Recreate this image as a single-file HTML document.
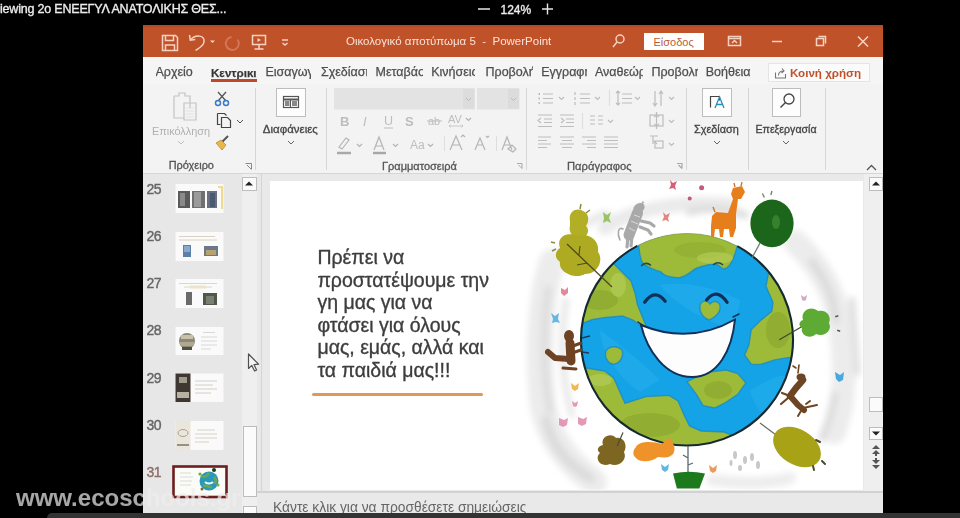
<!DOCTYPE html>
<html><head><meta charset="utf-8">
<style>
*{margin:0;padding:0;box-sizing:border-box}
html,body{width:960px;height:518px;overflow:hidden;background:#000}
body{position:relative;font-family:"Liberation Sans",sans-serif}
.a{position:absolute}
.t{position:absolute;white-space:nowrap;line-height:1}
#top{color:#ececec;font-size:12.5px;letter-spacing:-0.2px;-webkit-text-stroke:0.35px #ececec}
#win{left:143px;top:25px;width:740px;height:488px;background:#f3f3f3;overflow:hidden}
#tb{left:0;top:0;width:740px;height:32px;background:#c0522a;box-shadow:inset 0 2px 0 #b24d2a}
#tabs{left:0;top:32px;width:740px;height:27px;background:#f5f5f5}
#rib{left:0;top:59px;width:740px;height:90px;background:#f3f3f3;border-bottom:1px solid #d6d6d6}
#body{left:0;top:149px;width:740px;height:339px;background:#e6e6e6}
.tab{position:absolute;top:10px;font-size:12.5px;color:#4e4e4e;-webkit-text-stroke:0.25px #4e4e4e;white-space:nowrap;overflow:hidden;line-height:14px}
.sep{position:absolute;width:1px;background:#d4d4d4}
.lbl{position:absolute;font-size:11px;color:#444;white-space:nowrap;line-height:12px}
</style></head><body><div id="wrap" style="position:absolute;left:0;top:0;width:960px;height:518px;filter:blur(0.45px)">
<!-- top video bar -->
<div class="t" id="top" style="left:0;top:3px">iewing 2o ΕΝΕΕΓΥΛ ΑΝΑΤΟΛΙΚΗΣ ΘΕΣ...</div>
<div class="t" id="top" style="left:500.5px;top:3.5px;font-size:12px;letter-spacing:0">124%</div>
<svg class="a" style="left:470px;top:0" width="90" height="20" stroke="#e6e6e6" stroke-width="1.4"><path d="M8 9h12M72 9h11M77.5 3.5v11"/></svg>

<div class="a" id="win">
  <div class="a" id="tb">
    <svg class="a" style="left:0;top:0" width="740" height="32" fill="none" stroke="#f6d2c2" stroke-width="1.5">
      <!-- save -->
      <path d="M19.5 10.5h13l2 2v13h-15z"/><path d="M22.5 10.5v5h8v-5"/><path d="M22.5 25.5v-5.5h9v5.5"/>
      <!-- undo -->
      <path d="M46.5 10l0.8 5.2l5-0.6"/><path d="M47.3 15C53 8.5 62 10.5 61 17C60.5 21 56 23 52.5 25.5"/>
      <path d="M67 15.5l2.5 2.5l2.5-2.5" fill="#f6d2c2" stroke="none"/>
      <!-- redo faded -->
      <g stroke="#d4785a" stroke-width="1.8"><path d="M88.5 12a6.5 6.5 0 1 0 6 2.5"/></g>
      <!-- present -->
      <path d="M109.5 10.5h13v9h-13z"/><path d="M116 19.5v4.5M111.5 24h9"/><path d="M114.5 13l3.5 2l-3.5 2z" fill="#f6d2c2" stroke="none"/>
      <!-- customize -->
      <path d="M139 15h6M139.5 18l2.5 2l2.5-2"/>
      <!-- search -->
      <circle cx="477" cy="14" r="4"/><path d="M474 17l-4 5"/>
      <!-- ribbon display -->
      <path d="M585.5 11.5h12v9h-12z"/><path d="M585.5 13.5h12"/><path d="M589 18l2.5-2.5l2.5 2.5"/>
      <!-- minimize -->
      <path d="M629 16.5h10"/>
      <!-- restore -->
      <path d="M673.5 13.5h7v7h-7z"/><path d="M675.5 11.5h7v7"/>
      <!-- close -->
      <path d="M715 11.5l10 10M725 11.5l-10 10"/>
    </svg>
    <div class="t" style="left:203px;top:11px;font-size:11.5px;color:#fbe1d6">Οικολογικό αποτύπωμα 5&nbsp;&nbsp;-&nbsp;&nbsp;PowerPoint</div>
    <div class="a" style="left:501px;top:8px;width:60px;height:17px;background:#fff"></div>
    <div class="t" style="left:510.5px;top:11.5px;font-size:11px;color:#c05a36">Είσοδος</div>
  </div>
  <div class="a" id="tabs">
<div class="tab" style="left:12.5px;width:40px;top:8px">Αρχείο</div>
<div class="tab" style="left:68.0px;width:46px;top:8px;font-weight:bold;color:#333;font-size:11.6px;top:9px">Κεντρικι</div>
<div class="tab" style="left:122.5px;width:45.5px;top:8px">Εισαγωγή</div>
<div class="tab" style="left:178.0px;width:46px;top:8px">Σχεδίαση</div>
<div class="tab" style="left:232.5px;width:47.5px;top:8px">Μεταβάσεις</div>
<div class="tab" style="left:288.2px;width:44px;top:8px">Κινήσεις</div>
<div class="tab" style="left:342.5px;width:47px;top:8px">Προβολή</div>
<div class="tab" style="left:398.2px;width:45.5px;top:8px">Εγγραφή</div>
<div class="tab" style="left:452.0px;width:47.5px;top:8px">Αναθεώρηση</div>
<div class="tab" style="left:508.4px;width:47px;top:8px">Προβολή</div>
<div class="tab" style="left:562.7px;width:45px;top:8px">Βοήθεια</div>
<div class="a" style="left:67.5px;top:22px;width:46.5px;height:2.5px;background:#c0482a"></div>
<div class="a" style="left:624.6px;top:5.5px;width:102.5px;height:19.5px;background:#fbfbfb;border:1px solid #e4e4e4"></div>
<svg class="a" style="left:631px;top:10px" width="14" height="12" fill="none" stroke="#777" stroke-width="1.1"><path d="M1.5 5.5v5.5h10v-4"/><path d="M4.5 8.5c0-3 2-4.5 5-4.5M8 1.5l2 2.5l-2.5 2"/></svg>
<div class="t" style="left:647px;top:10px;font-size:11.6px;font-weight:bold;color:#c0502a">Κοινή χρήση</div>
</div>
  <div class="a" id="rib"></div>
  <div class="a" id="body"></div>
</div>


<!-- body overlay -->
<div class="a" style="left:143px;top:174px;width:114px;height:339px;background:#e7e7e8"></div>
<div class="a" style="left:242px;top:174px;width:15px;height:339px;background:#efefef"></div>
<div class="a" style="left:241.5px;top:176.8px;width:15.5px;height:14px;background:#fbfbfb;border:1px solid #bdbdbd"></div>
<svg class="a" style="left:241px;top:176.3px" width="16" height="15"><path d="M4 9.5l4-4l4 4z" fill="#222"/></svg>
<div class="a" style="left:242.5px;top:425.8px;width:14.5px;height:71.5px;background:#fbfbfb;border:1px solid #bcbcbc"></div>
<div class="a" style="left:242.5px;top:506px;width:14.5px;height:10px;background:#fbfbfb;border:1px solid #bcbcbc"></div>
<div class="a" style="left:257px;top:174px;width:626px;height:339px;background:#e8e8e8"></div>
<div class="a" style="left:260.5px;top:174px;width:1px;height:317px;background:#d6d6d6"></div>
<div class="a" style="left:263px;top:174px;width:606px;height:317px;background:#e9e9e9"></div>
<div class="a" style="left:270px;top:180.5px;width:592.5px;height:309px;background:#fff"></div>
<!-- right scrollbar -->
<div class="a" style="left:864px;top:174px;width:19px;height:317px;background:#efefef"></div>
<div class="a" style="left:869px;top:176.5px;width:13.5px;height:14px;background:#fbfbfb;border:1px solid #bdbdbd"></div>
<svg class="a" style="left:869px;top:176px" width="14" height="15"><path d="M3 9.5l4-4l4 4z" fill="#222"/></svg>
<div class="a" style="left:869px;top:396.5px;width:13.5px;height:15.5px;background:#fbfbfb;border:1px solid #bdbdbd"></div>
<div class="a" style="left:869px;top:426.5px;width:13.5px;height:13.5px;background:#fbfbfb;border:1px solid #bdbdbd"></div>
<svg class="a" style="left:869px;top:426px" width="14" height="40"><path d="M3 5.5l4 4l4-4z" fill="#222"/></svg>
<svg class="a" style="left:869px;top:443px" width="14" height="30" fill="#555"><path d="M3 6l4-4l4 4z M3 11l4-4l4 4z M3 17l4 4l4-4z M3 22l4 4l4-4z"/><path d="M6 11h2v2h-2zM6 15h2v2h-2z"/></svg>
<!-- notes -->
<div class="a" style="left:257px;top:491px;width:626px;height:1.5px;background:#d2d2d2"></div>
<div class="a" style="left:257px;top:492.5px;width:626px;height:21px;background:#e9e9e9"></div>
<div class="t" style="left:273px;top:501.2px;font-size:13.8px;color:#666">Κάντε κλικ για να προσθέσετε σημειώσεις</div>

<!-- slide thumbnails -->
<div class="t" style="left:146.5px;top:182px;font-size:14px;-webkit-text-stroke:0.4px currentColor;color:#666;letter-spacing:-0.6px">25</div>
<div class="t" style="left:146.5px;top:229px;font-size:14px;-webkit-text-stroke:0.4px currentColor;color:#666;letter-spacing:-0.6px">26</div>
<div class="t" style="left:146.5px;top:276px;font-size:14px;-webkit-text-stroke:0.4px currentColor;color:#666;letter-spacing:-0.6px">27</div>
<div class="t" style="left:146.5px;top:323px;font-size:14px;-webkit-text-stroke:0.4px currentColor;color:#666;letter-spacing:-0.6px">28</div>
<div class="t" style="left:146.5px;top:371px;font-size:14px;-webkit-text-stroke:0.4px currentColor;color:#666;letter-spacing:-0.6px">29</div>
<div class="t" style="left:146.5px;top:418px;font-size:14px;-webkit-text-stroke:0.4px currentColor;color:#666;letter-spacing:-0.6px">30</div>
<div class="t" style="left:146.5px;top:465px;font-size:14px;-webkit-text-stroke:0.4px currentColor;color:#8e7068;letter-spacing:-0.6px">31</div>
<svg class="a" style="left:170px;top:180px" width="60" height="320">
 <!-- 25 -->
 <rect x="5.5" y="4" width="48" height="29" fill="#fafafa"/>
 <path d="M48 7h4v22" stroke="#ecd46a" stroke-width="1.5" fill="none"/>
 <rect x="8" y="11" width="12" height="17" fill="#5a5a5a"/><rect x="10" y="13" width="5" height="13" fill="#8a8a8a"/>
 <rect x="22" y="11" width="13" height="17" fill="#707070"/><rect x="24" y="12" width="7" height="15" fill="#9a9a9a"/>
 <rect x="37" y="11" width="10" height="17" fill="#6a7080"/><rect x="40" y="13" width="5" height="14" fill="#4a5a70"/>
 <!-- 26 -->
 <rect x="5.5" y="52" width="48" height="29" fill="#fafafa"/>
 <path d="M9 56.5h36M9 60h38" stroke="#d0c8b8" stroke-width="0.8"/>
 <rect x="13" y="65" width="8" height="12" fill="#5b7fa8"/><rect x="14" y="66" width="6" height="6" fill="#88a8cc"/>
 <rect x="34" y="66" width="14" height="10" fill="#6a7888"/><rect x="36" y="70" width="10" height="5" fill="#b8a070"/>
 <!-- 27 -->
 <rect x="5.5" y="99" width="48" height="29" fill="#fafafa"/>
 <path d="M9 103.5h38M14 107h28" stroke="#d6ceb8" stroke-width="0.8"/><rect x="20" y="105.5" width="16" height="3" fill="#ede4c8"/>
 <rect x="16" y="112" width="6" height="13" fill="#6a6a6a"/><rect x="33" y="113" width="14" height="12" fill="#505848"/><rect x="36" y="116" width="8" height="8" fill="#7a8070"/>
 <!-- 28 -->
 <rect x="5.5" y="147" width="48" height="28" fill="#fafafa"/>
 <ellipse cx="17" cy="161" rx="8" ry="8" fill="#8c8878"/><rect x="11" y="155" width="12" height="4" fill="#c8c0a8"/><rect x="10" y="162" width="14" height="4" fill="#b0a890"/><rect x="12" y="167" width="10" height="3" fill="#505040"/>
 <path d="M33 152.5h12M31 157h16M31 161h16M31 165h16M31 169h10" stroke="#cfcfcf" stroke-width="0.8"/>
 <!-- 29 -->
 <rect x="5.5" y="193.5" width="48" height="28.5" fill="#fafafa"/>
 <rect x="5.5" y="193.5" width="15" height="28.5" fill="#3e3630"/><rect x="9" y="197" width="8" height="6" fill="#a09888"/><rect x="7" y="212" width="12" height="6" fill="#b8b0a0"/>
 <path d="M25 201h22M25 205h18M25 209h22M25 213h16" stroke="#cbc4b8" stroke-width="0.8"/>
 <!-- 30 -->
 <rect x="5.5" y="241" width="48" height="29" fill="#fafafa"/>
 <rect x="5.5" y="241" width="15" height="29" fill="#ebe6dc"/><ellipse cx="13" cy="253" rx="5" ry="3.5" fill="none" stroke="#9a8e80" stroke-width="0.8"/><path d="M7 265h12" stroke="#605850" stroke-width="1.2"/>
 <path d="M27 250h18M25 254h22M25 258h22M25 262h14" stroke="#cfc8ba" stroke-width="0.8"/>
 <!-- 31 -->
 <rect x="3.5" y="286.5" width="53" height="30.5" fill="#fbfbf8" stroke="#6e1e1e" stroke-width="2.6"/>
 <path d="M10 293h11M10 297h13M10 301h12M10 305h11" stroke="#d6d6d6" stroke-width="0.9"/>
 <circle cx="39" cy="301" r="9.5" fill="#2a98b8"/><path d="M31 296c4 2 6 0 8-3M33 306c3-2 6 2 9 1M44 297c2 2 2 5 1 7" stroke="#6aa858" stroke-width="2.5" fill="none"/>
 <path d="M35 302c2 2 6 2 8 0" stroke="#e8fff8" stroke-width="2" fill="none"/>
 <circle cx="44" cy="290" r="2" fill="#1e3a20"/><circle cx="30" cy="294" r="1.6" fill="#7aa838"/><circle cx="48" cy="305" r="1.6" fill="#8aa848"/><circle cx="32" cy="309" r="1.5" fill="#7a6a38"/>
</svg>

<!-- slide content -->
<div class="t" style="left:317.4px;top:246px;font-size:19.5px;line-height:22.6px;color:#3d3d3d;-webkit-text-stroke:0.35px #3d3d3d;white-space:pre">Πρέπει να
προστατέψουμε την
γη μας για να
φτάσει για όλους
μας, εμάς, αλλά και
τα παιδιά μας!!!</div>
<div class="a" style="left:312px;top:393px;width:171px;height:3px;background:#dc9a58;border-radius:2px"></div>
<svg class="a" style="left:0;top:0" width="960" height="518">
<defs>
 <clipPath id="gc"><circle cx="687" cy="339.5" r="106"/></clipPath>
 <clipPath id="sc"><rect x="270" y="180.5" width="592.5" height="309"/></clipPath>
 <filter id="bl" x="-50%" y="-50%" width="200%" height="200%"><feGaussianBlur stdDeviation="3"/></filter>
 <filter id="b1" x="-20%" y="-20%" width="140%" height="140%"><feGaussianBlur stdDeviation="0.6"/></filter>
</defs>
<g clip-path="url(#sc)">
 <g filter="url(#bl)" fill="none" stroke-linecap="round">
  <path d="M552 262 C540 300 538 350 542 400 C546 430 562 458 594 482" stroke-width="26" stroke="#ececec"/>
  <path d="M548 290 C542 330 544 380 550 410" stroke-width="8" stroke="#dedede"/>
  <path d="M546 420 C552 445 565 462 590 478" stroke-width="10" stroke="#dcdcdc"/>
  <path d="M566 300 C560 340 562 380 572 415" stroke-width="6" stroke="#e6e6e6"/>
  <path d="M795 242 C815 260 835 290 840 325 C846 360 846 400 834 432" stroke-width="24" stroke="#ececec"/>
  <path d="M812 262 C826 280 834 300 836 320" stroke-width="8" stroke="#dcdcdc"/>
  <path d="M852 300 L857 372" stroke-width="7" stroke="#e0e0e0"/>
  <path d="M835 395 C832 410 828 425 822 438" stroke-width="7" stroke="#dcdcdc"/>
  <path d="M605 228 C630 210 680 200 730 205" stroke-width="14" stroke="#eaeaea"/>
  <path d="M690 212 C710 205 730 210 745 215" stroke-width="8" stroke="#dedede"/>
  <path d="M712 480 C740 484 770 484 790 478" stroke-width="12" stroke="#ededed"/>
  <path d="M566 248 C572 232 588 220 606 214" stroke-width="8" stroke="#e8e8e8"/>
 </g>
 <!-- globe -->
 <g clip-path="url(#gc)">
  <rect x="575" y="228" width="230" height="225" fill="#14a3e6"/>
  <g fill="#2eb6f0" opacity="0.35"><path d="M660 285 C690 280 720 290 740 300 L735 330 C700 320 670 300 660 285z"/><path d="M600 330 C620 345 640 360 660 380 L640 392 C620 380 600 350 600 330z"/><path d="M750 390 C770 380 785 370 790 380 L770 420 C760 415 752 400 750 390z"/></g>
  <g fill="#9dbb38" stroke="#1586c4" stroke-width="1.4" stroke-opacity="0.7">
   <path d="M636 240 L638.75 246.25 C639.5 252 640 258 642 262 C646 268 656 270 661 272 C664 276 672 278 680 277.5 C688 276 692 270 697 268 C703 266 709 264 715 264 C720 265 721 269 724 269 C728 268 731 264 733 259 C735 254 736.5 250 737 246 L742 235 L690 222z"/>
   <path d="M611.9 261.9 L620.3 270.3 L631 281 L635.2 293.7 L637.3 304.3 L641.6 315 L645.7 325 L643.7 327.5 L633 320.2 L622.5 316 L605.5 317.5 L592.7 319.5 L582 323.4 L572 326 L572 250z"/>
   <path d="M583 360 L586 368 L604.6 371 L613.7 378 L623 399 L625 403.5 L646 396.6 L669 395.4 L678 401 L685 417 L689.5 426 L701 431 L724 432 L733 435.6 L748 442 L690 460 L570 440 L570 360z"/>
   <path d="M606 351 C609 346 617 345 622 350 C624 355 621 362 615 364 C609 365 604 358 606 351z"/>
   <path d="M687 381.7 L705.6 372.5 L726 370 L737.7 373.6 L745.8 382.8 L737.7 394.3 L724 403.5 L714.8 408 L703.3 405.8 L696.4 394.3z"/>
   <path d="M771 266 L768.4 273.7 L766 286.3 L773 302.3 L771.8 311.5 L760.3 320.7 L751.2 329.8 L748.9 345 L744.6 355 L751.5 364.4 L760.7 364.4 L774.5 359.9 L788 357.6 L800 357 L800 266z"/>
   <path d="M700 305 C702 300 708 300 710 304 C713 300 719 301 720 306 C721 312 715 318 709 320 C703 318 699 312 700 305z"/>
  </g>
  <g fill="#86a02c" opacity="0.5">
   <ellipse cx="700" cy="250" rx="26" ry="8" opacity="0.6"/><ellipse cx="600" cy="300" rx="18" ry="10"/><ellipse cx="650" cy="425" rx="30" ry="12"/><ellipse cx="778" cy="330" rx="12" ry="18"/><ellipse cx="718" cy="390" rx="14" ry="9"/>
  </g>
  <g fill="#c2d66a" opacity="0.45">
   <ellipse cx="715" cy="258" rx="18" ry="6"/><ellipse cx="618" cy="285" rx="8" ry="12"/><ellipse cx="600" cy="380" rx="12" ry="6"/>
  </g>
 </g>
 <path d="M737.3 246.2 A106 106 0 1 1 637.3 245.9" fill="none" stroke="#152a30" stroke-width="2.1"/><path d="M637.3 245.9 A106 106 0 0 1 737.3 246.2" fill="none" stroke="#8a9a50" stroke-width="1.2" opacity="0.6"/>
 <!-- smile -->
 <path d="M641 325 Q690 345 735 319.5 C732 350 718 377 692 377 C665 377 647 350 641 325z" fill="#fdfdfd" stroke="#12305a" stroke-width="2"/>
 <g fill="none" stroke="#12305a" stroke-width="3.2" stroke-linecap="round">
  <path d="M644.6 302.3 Q654.9 288 665.2 301.2"/>
  <path d="M706.5 300 Q716.8 287 727.1 302.3"/>
  <path d="M638 322 l6 4M733 317 l6 -3" stroke-width="1.5"/>
 </g>
 <g fill="none" stroke="#264a4a" stroke-width="1.6">
  <path d="M641 266 Q646 261 651 265.5"/><path d="M713 265 Q718 260.5 723 265"/>
 </g>
 <!-- decorations -->
 <g filter="url(#b1)">
  <!-- top-left tree -->
  <path d="M570 221 C568 212 576 207 583 211 C590 214 589 222 586 226 C590 230 588 236 582 238 C574 240 568 232 570 226z" fill="#b2ae26"/>
  <path d="M560 248 C556 238 566 231 577 236 C588 232 600 240 598 252 C604 260 598 274 585 274 C575 280 558 272 560 262 C554 258 555 251 560 248z" fill="#aeab24"/>
  <path d="M567 244 L612 287" stroke="#4e4a20" stroke-width="1.3"/><path d="M579 255 l1 -9M587 263 l-10 2" stroke="#4e4a20" stroke-width="1.1"/>
  <path d="M580 209 l1 -5M586 213 l4 -3M555 243 l-4 -1M556 249 l-4 2" stroke="#8a8a40" stroke-width="1.5"/>
  <!-- zebra -->
  <g stroke="#a9a9a9" stroke-linecap="round" fill="none">
   <path d="M637.5 213 L629 235" stroke-width="11"/>
   <path d="M641 221 L650 223 L654 226M640 227 L648 230 L651 234M628 237 L627 247M632 236 L631 246" stroke-width="3.2"/>
   <path d="M623 229 C618 226 617 234 620 240" stroke-width="1.6"/>
  </g>
  <ellipse cx="639" cy="208" rx="6" ry="4.5" transform="rotate(-30 639 208)" fill="#a9a9a9"/>
  <path d="M642 204 l1.5 -2.5" stroke="#a9a9a9" stroke-width="1.5"/>
  <path d="M634 215 l6 2M631 221 l7 3M629 228 l6 3" stroke="#d8d8d8" stroke-width="1"/>
  <!-- giraffe -->
  <path d="M733 188 L742 186 L745 192 L741 199 L738 199 L736 214 L736 228 L733 237 L730 237 L729 229 L724 229 L723 237 L720 237 L719 229 L715 229 L714 237 L711 237 L711 226 L712 216 L716 212 L728 213 L733 199 L731 194z" fill="#e67e1e"/>
  <path d="M735 187 l-1 -4M741 186 l1 -4M715 212 l-2 -5" stroke="#c87030" stroke-width="1.3"/>
  <!-- dark green tree -->
  <path d="M760 243 L752 258" stroke="#6a7a70" stroke-width="1.3"/>
  <ellipse cx="772" cy="223.4" rx="21.6" ry="23.8" fill="#1d661b"/>
  <ellipse cx="776" cy="222" rx="4" ry="7" fill="#3d8a34" opacity="0.8"/>
  <path d="M764.4 197.5 l-2 -4M770.9 195 l1 -4" stroke="#6a8a6a" stroke-width="1.4"/>
  <!-- right bush -->
  <path d="M779.3 339.8 L802.5 326.3" stroke="#3a4a30" stroke-width="1.2"/>
  <path d="M803 320 C800 310 812 305 818 311 C826 309 832 316 829 323 C833 330 824 338 816 334 C810 340 800 335 802 328 C798 326 799 321 803 320z" fill="#5dab34"/>
  <path d="M835.3 316.7 l3 -1M837.2 330.2 l3 1" stroke="#5a5a50" stroke-width="1.6"/>
  <!-- blue butterfly right -->
  <path d="M835 372 l5 3 l4 -3 l-1 8 l-4 2 l-3 -3z" fill="#4aa8e0"/>
  <!-- deer -->
  <g stroke="#6e4520" stroke-linecap="round" stroke-linejoin="round" fill="none">
   <path d="M799 365 L798 373M796 368 l-3 -2" stroke-width="1.6"/>
   <path d="M803 380 L796 388 L790 396" stroke-width="6.5"/>
   <path d="M790 396 L782 393M788 398 L781 404" stroke-width="2.2"/>
   <path d="M791 397 L798 405 L804 410" stroke-width="6"/>
   <path d="M803 408 L817 405M801 411 L798 416M806 404 l4 -3" stroke-width="2"/>
  </g>
  <ellipse cx="801" cy="377" rx="4.5" ry="3.5" fill="#6e4520"/>
  <!-- olive leaf -->
  <path d="M760 422.9 L775.4 434.4" stroke="#6a6a60" stroke-width="1.2"/>
  <ellipse cx="797" cy="447" rx="26" ry="17.5" transform="rotate(32 797 447)" fill="#a8a218"/>
  <path d="M816 440 l4 2M822 461 l3 3M813 466 l1 4" stroke="#4a4a30" stroke-width="2" stroke-linecap="round"/>
  <!-- green pot -->
  <path d="M688 446 L688 473 M688 458 l-5 -3 M688 465 l5 -2" stroke="#5a6a70" stroke-width="1.3"/>
  <path d="M673 473.4 Q689 470 705 473.4 L699.4 488.4 L676.9 488.4z" fill="#1f7a1f"/>
  <!-- orange animal -->
  <path d="M636 447 C640 440 655 442 662 444 L668 438 C672 440 676 446 674 452 C672 458 664 458 658 457 C652 462 640 463 636 458 C632 455 633 450 636 447z" fill="#f0922a"/>
  <!-- brown bush -->
  <path d="M603 445 C600 436 612 432 616 438 C624 436 628 446 624 452 C628 460 618 468 610 464 C600 468 594 458 600 453 C596 450 598 446 603 445z" fill="#7d6620"/>
  <path d="M623 432.5 L617.2 446" stroke="#4a4a40" stroke-width="1.2"/>
  <!-- monkey -->
  <g stroke="#6e4220" stroke-linecap="round" stroke-linejoin="round" fill="none">
   <path d="M570 343 L571 361" stroke-width="9"/>
   <path d="M569 359 L555 358 L548 352" stroke-width="6"/>
   <path d="M563 368 L576 369M573 346 L581 343M575 352 L581 350" stroke-width="3"/>
  </g>
  <ellipse cx="569" cy="336" rx="5" ry="6" fill="#6e4220"/>
  <path d="M582 338 l8 -2M582 352 l7 1" stroke="#1e3a5a" stroke-width="1.3"/>
  <!-- small butterflies -->
  <g opacity="0.9">
  <path d="M603 212 l4 3 l4 -3 l-2 6 l2 5 l-4 -2 l-4 2 l1 -5z" fill="#8fbf5a"/>
  <path d="M663 212 l3 3 l4 -2 l-2 5 l1 4 l-3 -2 l-4 1 l2 -4z" fill="#e07a70"/>
  <path d="M670 180 l3 3 l4 -2 l-2 5 l1 4 l-3 -2 l-4 1 l2 -4z" fill="#d0506a"/>
  <circle cx="701.6" cy="187.7" r="2.5" fill="#c04a6a"/><circle cx="689.7" cy="198.6" r="2" fill="#c04a6a"/>
  <path d="M561 288 l4 2 l3 -3 l0 6 l-4 3 l-3 -3z" fill="#e07a90"/>
  <path d="M551 313 l4 3 l4 -3 l-1 6 l2 4 l-4 -1 l-4 1 l1 -4z" fill="#5ab0e0"/>
  <path d="M571 383 l4 3 l4 -3 l-1 6 l-3 2 l-3 -2z" fill="#f0b040"/>
  <path d="M572 401 l3 2 l3 -2 l-1 5 l-2 1 l-2 -1z" fill="#e090b0"/>
  <path d="M559 418 l5 2 l4 -2 l-1 7 l-4 2 l-4 -2z" fill="#e090b0"/><path d="M578 417 l5 2 l4 -2 l-1 7 l-4 2 l-4 -2z" fill="#e090b0"/>
  <path d="M661 464 l4 3 l4 -3 l-1 6 l-3 2 l-3 -2z" fill="#50b0e0"/>
  <path d="M709 465 l4 3 l4 -3 l-1 6 l-3 2 l-3 -2z" fill="#e8904a"/>
  <path d="M801 295 l3 2 l3 -2 l-1 5 l-2 1 l-2 -1z" fill="#d0a0c0"/>
  </g>
  <g fill="#c8c8c8"><ellipse cx="735" cy="455" rx="2" ry="4"/><ellipse cx="745" cy="460" rx="2" ry="4"/><ellipse cx="752" cy="457" rx="2" ry="4"/><ellipse cx="758" cy="465" rx="2" ry="4"/><ellipse cx="740" cy="468" rx="2" ry="3"/><ellipse cx="731" cy="463" rx="1.5" ry="3"/></g>
 </g>
</g>
</svg>
<svg class="a" style="left:0;top:0" width="960" height="518"><path d="M248.5 354 L248.5 368.5 L251.8 365.4 L254.6 371 L256.6 370 L254 364.6 L258.6 364.2 z" fill="#f4f4f4" stroke="#505050" stroke-width="1.2" stroke-linejoin="round"/></svg>
<!-- ribbon overlay (global coords) -->
<svg class="a" style="left:0;top:0" width="960" height="518">
 <g fill="none" stroke-width="1">
  <!-- separators -->
  <path d="M255.5 88v82M326.5 88v82M526.5 88v82M686.5 88v82M748.5 88v82M825.5 88v82" stroke="#d6d6d6"/>
  <!-- paste -->
  <g stroke="#c4c4c4" stroke-width="1.2">
   <path d="M174 96h5v-3h6v3h5v12"/><path d="M174 96v22h10"/><path d="M184 103h12v17h-12z"/>
   <path d="M186 108h8M186 111h8M186 114h8M186 117h8" stroke="#dcdcdc" stroke-width="0.8"/>
  </g>
  <path d="M178 141l3 3l3-3" stroke="#c0c0c0"/>
  <!-- scissors -->
  <path d="M218 92l8 9M226 92l-8 9" stroke="#555" stroke-width="1.3"/>
  <circle cx="218" cy="103" r="2.5" stroke="#3b78c4" stroke-width="1.5"/><circle cx="226" cy="103" r="2.5" stroke="#3b78c4" stroke-width="1.5"/>
  <!-- copy -->
  <path d="M217.5 113.5h7l2 2M217.5 113.5v11h3" stroke="#444" stroke-width="1.2"/><path d="M221.5 117.5h6l3 3v7h-9z" stroke="#444" stroke-width="1.2"/>
  <path d="M237 120l3 3l3-3" stroke="#555"/>
  <!-- format painter -->
  <path d="M228 136l-6 6" stroke="#555" stroke-width="2"/>
  <path d="M216 143l5-3l5 5l-4 5z" fill="#e8b84a" stroke="#b8902a" stroke-width="0.8"/>
  <!-- launcher -->
  <path d="M245.5 163.5h6v6M247 165l4 4" stroke="#888"/>
  <!-- slides button -->
  <rect x="276.5" y="88.5" width="29" height="28" fill="#fdfdfd" stroke="#bdbdbd"/>
  <rect x="283.5" y="96.5" width="15" height="11" stroke="#555" stroke-width="1.2"/>
  <path d="M283.5 99.5h15" stroke="#555" stroke-width="2"/>
  <path d="M290.5 100v7" stroke="#555" stroke-width="1"/>
  <rect x="285" y="101" width="4.5" height="5" fill="#888" stroke="none"/><rect x="292" y="101" width="5" height="5" fill="#888" stroke="none"/>
  <path d="M288 141l3 3l3-3" stroke="#666"/>
  <!-- font boxes -->
  <rect x="334" y="88" width="141" height="21.5" fill="#e3e3e3" stroke="none"/>
  <rect x="463" y="89" width="11" height="19.5" fill="#dcdcdc" stroke="none"/>
  <path d="M466 98l2.5 2.5l2.5-2.5" stroke="#bbb"/>
  <rect x="477" y="88" width="42.5" height="21.5" fill="#e3e3e3" stroke="none"/>
  <rect x="508" y="89" width="11" height="19.5" fill="#dcdcdc" stroke="none"/>
  <path d="M511 98l2.5 2.5l2.5-2.5" stroke="#bbb"/>
  <path d="M517 163.5h5v5M518.5 165l3.5 3.5" stroke="#aaa"/>
  <!-- font row 3 icons -->
  <g stroke="#b4b4b4" stroke-width="1.2">
   <path d="M339 147l7-9l3 2l-7 9z"/><path d="M337 153h14" stroke="#a8a8a8" stroke-width="2.5"/>
   <path d="M357 144l2.5 2.5l2.5-2.5M393 144l2.5 2.5l2.5-2.5M428 144l2.5 2.5l2.5-2.5M466 118l2.5 2.5l2.5-2.5"/>
   <path d="M374 150l5-13l5 13M376 146h6"/><path d="M373 153h13" stroke="#a8a8a8" stroke-width="2.5"/>
   <path d="M444.5 136v15M496.5 136v15" stroke="#dedede" stroke-width="1"/>
   <path d="M450 150l6-14l6 14M452.5 145h7M461 137l2 -2l2 2"/>
   <path d="M475 150l5-12l5 12M477 145h6M486 136l1.5 1.5l1.5-1.5"/>
   <path d="M502 150l5-13l5 13M504 145h6M508 149l4-4l4 4l-3 3z"/>
   <path d="M583 93.5h-0"/>
  </g>
  <!-- paragraph icons -->
  <g stroke="#bdbdbd" stroke-width="1.2">
   <!-- bullets -->
   <path d="M543 94h10M543 98.5h10M543 103h10"/><path d="M538.5 94h1.5M538.5 98.5h1.5M538.5 103h1.5" stroke-width="2"/>
   <path d="M559 97l2.5 2.5l2.5-2.5M595 97l2.5 2.5l2.5-2.5M635 97l2.5 2.5l2.5-2.5M669 97l2.5 2.5l2.5-2.5M608 120l2.5 2.5l2.5-2.5M669 120l2.5 2.5l2.5-2.5M669 143l2.5 2.5l2.5-2.5"/>
   <!-- numbering -->
   <path d="M580 94h10M580 98.5h10M580 103h10M575 92v3M575 97v3M575 102v3"/>
   <path d="M609.5 90v16" stroke="#dedede"/>
   <!-- line spacing -->
   <path d="M622 94h10M622 98.5h10M622 103h10M618 91v14M616 93l2-2l2 2M616 103l2 2l2-2"/>
   <!-- text direction -->
   <path d="M655 91v15M653 103l2 3l2-3M661 106v-15M659 94l2-3l2 3"/>
   <!-- indents -->
   <path d="M538 115h14M544 119h8M544 122.5h8M538 126.5h14M541 118l-3 2.5l3 2.5"/>
   <path d="M560 115h14M566 119h8M566 122.5h8M560 126.5h14M561 118l3 2.5l-3 2.5"/>
   <path d="M582.5 113v16" stroke="#dedede"/>
   <path d="M590 116h5M590 120h5M590 124h5M598 116h5M598 120h5M598 124h5"/>
   <!-- align text -->
   <rect x="650" y="115" width="13" height="11"/><path d="M656.5 112v17M654 117l2.5-2l2.5 2M654 124l2.5 2l2.5-2"/>
   <!-- align rows -->
   <path d="M538 137h13M538 140.5h9M538 144h13M538 147.5h9"/>
   <path d="M560 137h14M562 140.5h10M560 144h14M562 147.5h10"/>
   <path d="M582 137h14M587 140.5h9M582 144h14M587 147.5h9"/>
   <path d="M604 137h14M604 140.5h14M604 144h14M604 147.5h14"/>
   <!-- smartart -->
   <path d="M650 136h8M653 136v8M654 141l3 3"/><rect x="655" y="141" width="8" height="7"/>
   <path d="M677 163.5h5v5M678.5 165l3.5 3.5" stroke="#aaa"/>
  </g>
  <!-- B I U S abc AV -->
  <!-- drawing -->
  <rect x="702.5" y="88.5" width="29" height="28" fill="#fdfdfd" stroke="#bdbdbd"/>
  <path d="M710.5 107.5v-11h9v4" stroke="#444" stroke-width="1.2"/>
  <path d="M715 108l4.5-11l4.5 11M716.7 104.5h5.6" stroke="#2a8fb8" stroke-width="1.3"/>
  <path d="M714 141l3 3l3-3" stroke="#666"/>
  <!-- editing -->
  <rect x="772.5" y="88.5" width="28" height="28" fill="#fdfdfd" stroke="#bdbdbd"/>
  <circle cx="789" cy="99" r="5" stroke="#444" stroke-width="1.3"/><path d="M785.5 102.5l-5 5" stroke="#444" stroke-width="1.4"/>
  <path d="M783 141l3 3l3-3" stroke="#666"/>
  <!-- collapse -->
  <path d="M867 170l4.5-4.5l4.5 4.5" stroke="#555" stroke-width="1.3"/>
 </g>
 <g font-family="Liberation Sans" fill="#bdbdbd">
  <text x="340" y="125.5" font-size="13" font-weight="bold">B</text>
  <text x="363" y="125.5" font-size="13" font-style="italic">I</text>
  <text x="384" y="125" font-size="12.5">U</text><path d="M384 128h9" stroke="#bdbdbd" stroke-width="1"/>
  <text x="405" y="125.5" font-size="13" font-weight="bold">S</text>
  <text x="428" y="125" font-size="11">ab</text><path d="M427 121h15" stroke="#bdbdbd" stroke-width="1"/>
  <text x="448" y="123" font-size="11">AV</text><path d="M449 126h14M449 126l1.5-1.5M449 126l1.5 1.5M463 126l-1.5-1.5M463 126l-1.5 1.5" stroke="#bdbdbd" stroke-width="0.8"/>
  <text x="410" y="149" font-size="12">Aa</text>
 </g>
 <g font-family="Liberation Sans" stroke-width="0.3">
  <text x="152" y="134.5" font-size="10.9" fill="#b0b0b0">Επικόλληση</text>
  <text x="168.7" y="169.2" font-size="10.95" fill="#555" stroke="#555">Πρόχειρο</text>
  <text x="262.8" y="132.5" font-size="11.5" fill="#444" stroke="#444">Διαφάνειες</text>
  <text x="382" y="169.6" font-size="11" fill="#555" stroke="#555">Γραμματοσειρά</text>
  <text x="567" y="170" font-size="11.2" fill="#555" stroke="#555">Παράγραφος</text>
  <text x="694" y="133" font-size="10.9" fill="#444" stroke="#444">Σχεδίαση</text>
  <text x="755.5" y="133" font-size="10.6" fill="#444" stroke="#444">Επεξεργασία</text>
 </g>
</svg>
<div class="t" style="left:16px;top:486px;font-size:24px;font-weight:bold;color:rgba(238,238,238,0.7)">www.ecoschools.gr</div>
<div class="a" style="left:47px;top:513px;width:913px;height:10px;background:#333;border-radius:5px 0 0 0"></div>
</div></body></html>
